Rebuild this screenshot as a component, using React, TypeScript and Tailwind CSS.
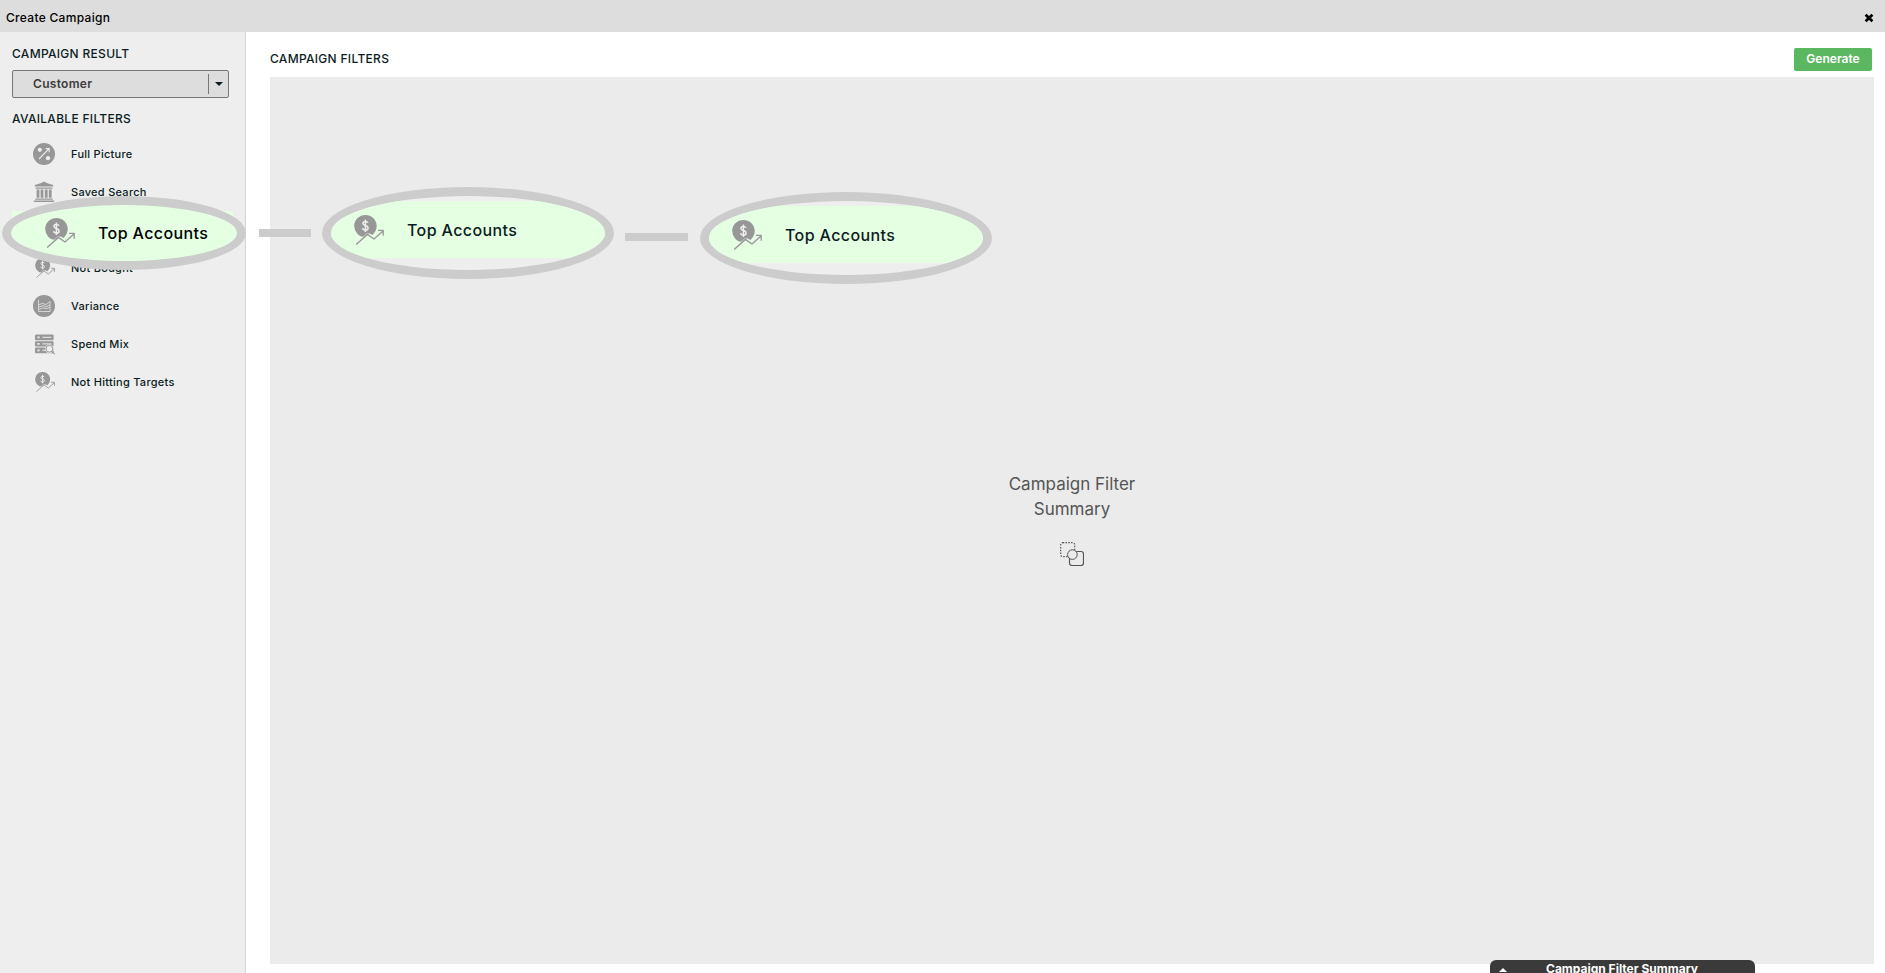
import React from 'react';

interface IconProps {
  className?: string;
}

const PercentIcon: React.FC<IconProps> = ({ className }) => (
  <svg viewBox="0 0 22 22" className={className} aria-hidden="true">
    <circle cx="11" cy="11" r="11" fill="#979797" />
    <circle cx="6.8" cy="6.8" r="2.1" fill="#eee" />
    <circle cx="15" cy="15.2" r="2.1" fill="#eee" />
    <path d="M6 16 15.6 6.2M12.6 5.6h3.6v3.6" fill="none" stroke="#eee" strokeWidth="1.1" />
  </svg>
);

const BankIcon: React.FC<IconProps> = ({ className }) => (
  <svg viewBox="0 0 22 22" className={className} fill="#979797" aria-hidden="true">
    <path d="M11 .6C13 2 17 3.4 20.2 4v1.6H1.8V4C5 3.4 9 2 11 .6Z" />
    <path d="M2.6 6.4h16.8v1.4H2.6zM3.6 8.6h2.8v8.2H3.6zM7.6 8.6h2.8v8.2H7.6zM11.8 8.6h2.8v8.2h-2.8zM15.8 8.6h2.8v8.2h-2.8zM2.4 17.4h17.2v1.4H2.4zM.8 19.6h20.4V21H.8z" />
  </svg>
);

const DollarTrendIcon: React.FC<IconProps> = ({ className }) => (
  <svg viewBox="0 0 30 30" className={className} fill="none" aria-hidden="true">
    <path
      d="M11.4 0a11 11 0 0 1 9.8 16.4L18.6 20l-3.6-1.8-4 3.8A11 11 0 0 1 11.4 0Z"
      fill="#979797"
    />
    <path
      d="M14 7.8C13.6 6.9 12.8 6.4 11.4 6.4c-1.6 0-2.5.8-2.5 1.9 0 2.8 5.2 1.7 5.2 4.6 0 1.4-1 2.2-2.7 2.2-1.6 0-2.6-.7-2.8-1.9M11.4 4.4v12.6"
      stroke="#eee"
      strokeWidth="1.5"
    />
    <path d="M2.4 28.8 13.2 19.4l6.6 4.4 8.6-7" stroke="#eee" strokeOpacity=".5" strokeWidth="2.6" />
    <path d="M2.2 29.4 13.4 19.4l6.6 4.6 9-8M24 15.4h5.2v5.4" stroke="#979797" strokeWidth="1.3" />
  </svg>
);

const ChartIcon: React.FC<IconProps> = ({ className }) => (
  <svg viewBox="0 0 22 22" className={className} fill="none" aria-hidden="true">
    <circle cx="11" cy="11" r="11" fill="#979797" />
    <path
      d="M5.5 5v11.5h12M17 16V6.4l-4 3.2-3.4-1.2L6 9.6M6 12l4-1.4 3 1.2 4-2M6 14.4l4-1.6 3.4 1 3.6-1.6"
      stroke="#ddd"
      strokeWidth=".9"
    />
  </svg>
);

const ServerSearchIcon: React.FC<IconProps> = ({ className }) => (
  <svg viewBox="0 0 22 22" className={className} fill="none" aria-hidden="true">
    <rect x="2" y="1.6" width="18.6" height="5.6" rx="1" fill="#979797" />
    <rect x="2" y="8.2" width="18.6" height="5.4" rx="1" fill="#979797" />
    <rect x="2" y="14.6" width="18.6" height="5.6" rx="1" fill="#979797" />
    <path d="M9.4 4.4h9M9.4 10.9h9M9.4 17.4h4" stroke="#ddd" strokeWidth="1.1" />
    <path d="M4.4 4.4h2.2M4.4 10.9h2.2M4.4 17.4h2.2" stroke="#eee" strokeWidth="1.6" />
    <circle cx="16.4" cy="15.8" r="4.4" fill="#eee" />
    <circle cx="16.4" cy="15.8" r="3.4" stroke="#979797" strokeWidth="1" />
    <path d="m18.8 18.4 2.8 2.8" stroke="#979797" strokeWidth="1.2" />
  </svg>
);

const CombineIcon: React.FC<IconProps> = ({ className }) => (
  <svg viewBox="0 0 24 24" className={className} fill="none" stroke="#555" aria-hidden="true">
    <rect x="0.7" y="0.7" width="14" height="14" rx="2" strokeWidth="1.2" strokeDasharray="1.5 1.3" />
    <rect x="9.5" y="9.5" width="14" height="14" rx="2.4" strokeWidth="1.2" />
    <circle cx="12.4" cy="12.6" r="4.8" fill="#ebebeb" strokeWidth="1" />
  </svg>
);

const filters = [
  { label: 'Full Picture', Icon: PercentIcon, iconClass: 'h-[22px] w-[22px]' },
  { label: 'Saved Search', Icon: BankIcon, iconClass: 'h-[22px] w-[22px]' },
  { label: 'Top Accounts', Icon: DollarTrendIcon, iconClass: 'ml-[2px] h-5 w-5', active: true },
  { label: 'Not Bought', Icon: DollarTrendIcon, iconClass: 'ml-[2px] h-5 w-5' },
  { label: 'Variance', Icon: ChartIcon, iconClass: 'h-[22px] w-[22px]' },
  { label: 'Spend Mix', Icon: ServerSearchIcon, iconClass: 'h-[22px] w-[22px]' },
  { label: 'Not Hitting Targets', Icon: DollarTrendIcon, iconClass: 'ml-[2px] h-5 w-5' },
];

const DroppedFilter: React.FC = () => (
  <div className="h-[92px] w-[292px] overflow-hidden rounded-[50%] border-9 border-[#ccc] bg-[#eee] pt-[5px]">
    <div className="flex h-[57px] items-center bg-[#e5ffe3] pl-[23px]">
      <DollarTrendIcon className="h-[30px] w-[30px]" />
      <span className="pl-[23px] text-base font-medium tracking-wide">Top Accounts</span>
    </div>
  </div>
);

export default function App() {
  return (
    <div className="relative flex h-screen flex-col overflow-hidden bg-white font-['Inter',sans-serif] text-[#0b1c22]">
      <header className="flex h-8 shrink-0 items-center justify-between bg-[#ddd] pt-1 pr-[11px] pl-[6px] text-black">
        <h1 className="text-xs font-medium tracking-wide">Create Campaign</h1>
        <button type="button" aria-label="Close" className="h-[10px] w-[10px]">
          <svg viewBox="0 0 10 10" className="h-[10px] w-[10px]" aria-hidden="true">
            <path d="m1.6 1.8 6.8 6.4M8.4 1.8 1.6 8.2" stroke="#000" strokeWidth="2.8" />
          </svg>
        </button>
      </header>

      <div className="flex min-h-0 flex-1">
        <aside className="w-[246px] shrink-0 border-r border-[#d4d4d4] bg-[#eee] px-3 pt-3">
          <label htmlFor="result" className="block text-xs leading-5 font-medium tracking-wide">
            CAMPAIGN RESULT
          </label>
          <div className="relative mt-[6px] h-7 w-[217px]">
            <select
              id="result"
              className="h-7 w-full appearance-none rounded-xs border border-[#777] bg-[#ddd] pl-5 text-xs font-semibold tracking-wide text-[#3c3c3c]"
            >
              <option>Customer</option>
            </select>
            <span className="pointer-events-none absolute inset-y-1 right-0 flex w-[21px] items-center justify-center border-l border-[#777]">
              <svg viewBox="0 0 8 4" className="h-1 w-2" aria-hidden="true">
                <path d="M0 0h8L4 4z" fill="#0b1c22" />
              </svg>
            </span>
          </div>
          <h2 className="mt-[11px] text-xs leading-5 font-medium tracking-wide">AVAILABLE FILTERS</h2>
          <ul className="mt-[6px]">
            {filters.map(({ label, Icon, iconClass, active }) => (
              <li key={label} className={active ? 'bg-[#e5ffe3]' : ''}>
                <button type="button" className="flex h-[38px] w-full items-center pl-[21px]">
                  <Icon className={iconClass} />
                  <span className="pl-4 text-[11px] font-medium tracking-wide">{label}</span>
                </button>
              </li>
            ))}
          </ul>
        </aside>

        <main className="flex min-w-0 flex-1 flex-col pr-[11px] pb-[9px] pl-6">
          <div className="flex h-[45px] shrink-0 items-center justify-between pt-[9px] pr-[2px]">
            <h2 className="text-xs font-medium tracking-wide">CAMPAIGN FILTERS</h2>
            <button
              type="button"
              className="h-[23px] w-[78px] rounded-xs bg-[#5cb860] text-xs font-semibold text-white"
            >
              Generate
            </button>
          </div>
          <section className="flex flex-1 flex-col items-center justify-center bg-[#ebebeb] pb-1">
            <p className="w-[140px] text-center text-[17px] leading-[25px] text-[#555]">
              Campaign Filter Summary
            </p>
            <CombineIcon className="mt-5 h-6 w-6" />
          </section>
        </main>
      </div>

      {/* filter being dragged out of the list and onto the canvas */}
      <div className="absolute top-[196px] left-[2px] flex h-[74px] w-[244px] items-center rounded-[50%] border-9 border-[#ccc] bg-[#e5ffe3] pl-[34px]">
        <DollarTrendIcon className="h-[30px] w-[30px]" />
        <span className="pl-[23px] text-base font-medium tracking-wide text-black">Top Accounts</span>
      </div>
      <div className="absolute top-[229px] left-[259px] h-2 w-[52px] bg-[#ccc]" />
      <div className="absolute top-[187px] left-[322px]">
        <DroppedFilter />
      </div>
      <div className="absolute top-[233px] left-[625px] h-2 w-[63px] bg-[#ccc]" />
      <div className="absolute top-[192px] left-[700px]">
        <DroppedFilter />
      </div>

      <button
        type="button"
        className="absolute right-[130px] -bottom-[15px] flex h-7 w-[265px] items-start rounded-t-md bg-[#3a3a3a] pt-px text-white"
      >
        <svg viewBox="0 0 8 4" className="mt-[7px] ml-[9px] h-1 w-2 shrink-0" aria-hidden="true">
          <path d="M0 4h8L4 0z" fill="#fff" />
        </svg>
        <span className="flex-1 pr-[18px] text-center text-xs font-bold">Campaign Filter Summary</span>
      </button>
    </div>
  );
}
